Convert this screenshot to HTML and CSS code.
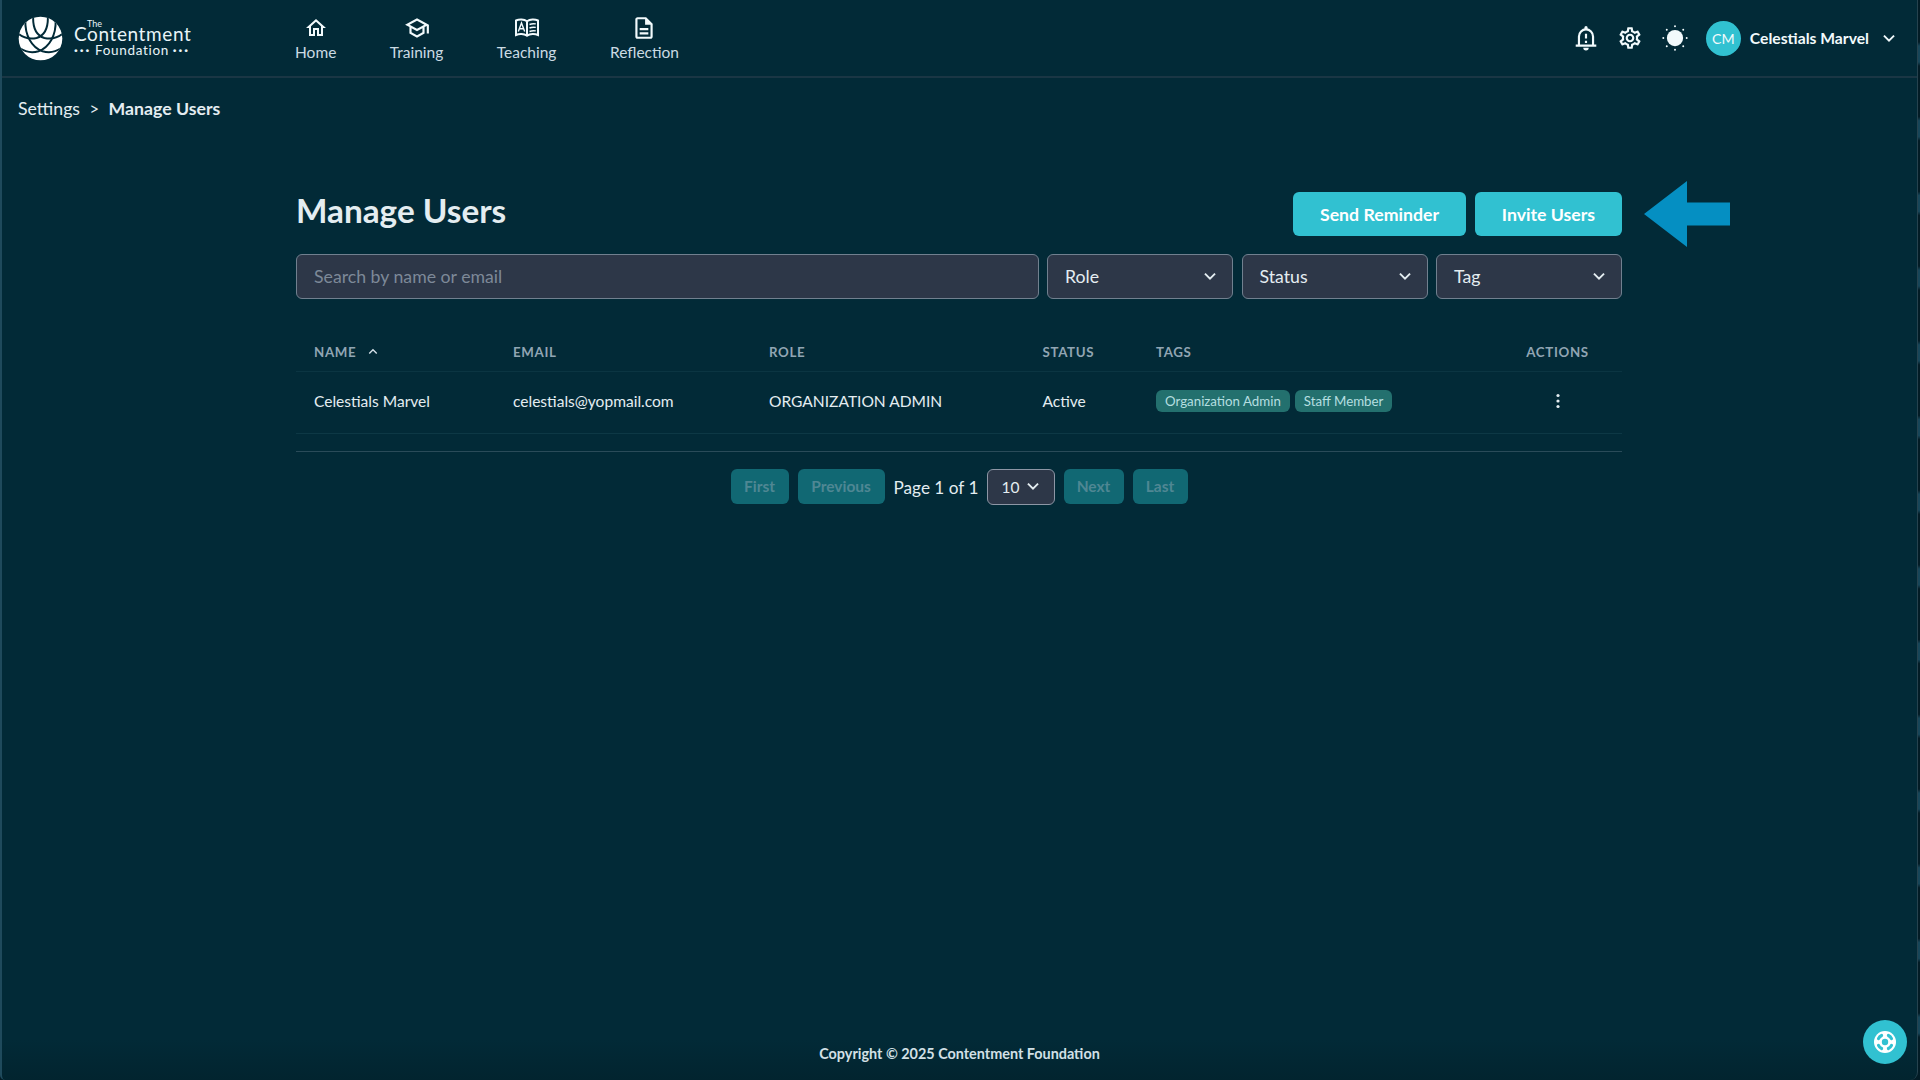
FILE: index.html
```html
<!DOCTYPE html>
<html lang="en">
<head>
  <meta charset="UTF-8">
  <title>Manage Users</title>
  <link rel="stylesheet" href="styles.css">
</head>
<body>
<div class="app">

  <header class="header">
    <a class="logo">
      <svg class="logo-mark" viewBox="0 0 46 46">
        <defs><clipPath id="disc"><circle cx="23" cy="23" r="22.3"/></clipPath></defs>
        <circle cx="23" cy="23" r="22.3" fill="#fff"/>
        <g clip-path="url(#disc)" fill="none" stroke="#022a37" stroke-width="2">
          <path d="M15.500 0C15 12 19 20 27 22.500C34 24 41 22 46 18"/>
          <path d="M30.500 0C31 12 27 20 19 22.500C12 24 5 22 0 18"/>
          <path d="M7.500 4C7 20 14 32 25 36C32 38 38 37 44 33"/>
          <path d="M38.500 4C39 20 32 32 21 36C14 38 8 37 2 33"/>
        </g>
      </svg>
      <span class="logo-text">
        <span class="logo-the">The</span>
        <span class="logo-name">Contentment</span>
        <span class="logo-sub"><i>···</i>Foundation<i>···</i></span>
      </span>
    </a>

    <nav class="nav">
      <a class="nav-item">
        <svg viewBox="0 0 24 24"><path d="M12 5.69l5 4.5V18h-2v-6H9v6H7v-7.81l5-4.5M12 3L2 12h3v8h6v-6h2v6h6v-8h3L12 3z"/></svg>
        Home
      </a>
      <a class="nav-item">
        <svg class="cap" viewBox="0 0 24 24"><path d="M12 3L1 9l4 2.18v6L12 21l7-3.82v-6l2-1.09V17h2V9L12 3zm6.82 6L12 12.72 5.18 9 12 5.28 18.82 9zM17 15.99l-5 2.73-5-2.73v-3.72L12 15l5-2.73v3.72z"/></svg>
        Training
      </a>
      <a class="nav-item">
        <svg class="book" viewBox="0 0 26 20"><g fill="none" stroke="currentColor" stroke-width="2"><path d="M13 3.200C10 1 5 1 2 2.500V17C5 15.500 10 15.500 13 17.700C16 15.500 21 15.500 24 17V2.500C21 1 16 1 13 3.200V17"/><path stroke-width="1.400" d="M4.300 13.500L7.500 5l3.200 8.500M5.500 10.800h4M15.500 6.500c2-.9 4-1 6.300-.6M15.500 10c2-.9 4-1 6.300-.6M15.500 13.500c2-.9 4-1 6.300-.6"/></g></svg>
        Teaching
      </a>
      <a class="nav-item">
        <svg class="doc" viewBox="0 0 24 24"><path d="M8 16h8v2H8zm0-4h8v2H8zm6-10H6c-1.100 0-2 .9-2 2v16c0 1.100.89 2 1.990 2H18c1.100 0 2-.9 2-2V8l-6-6zm4 18H6V4h7v5h5v11z"/></svg>
        Reflection
      </a>
    </nav>

    <div class="tools">
      <svg class="tool" viewBox="0 0 24 24"><g fill="none" stroke="currentColor" stroke-width="2"><path d="M2.500 19h19M5.500 19v-8.500a6.500 6.500 0 0 1 13 0V19"/><path d="M12 8v4.500M12 14.500v2"/></g><path d="M10.500 4.500V2.500a1.500 1.500 0 0 1 3 0v2zM9.500 21h5a2.500 2.500 0 0 1-5 0z"/></svg>
      <svg class="tool" viewBox="0 0 24 24"><path d="M19.430 12.980c.04-.32.07-.64.07-.98 0-.34-.03-.66-.07-.98l2.110-1.650c.19-.15.24-.42.12-.64l-2-3.460c-.09-.16-.26-.25-.44-.25-.06 0-.12.010-.17.030l-2.490 1c-.52-.4-1.080-.73-1.690-.98l-.38-2.650C14.460 2.180 14.250 2 14 2h-4c-.25 0-.46.18-.49.42l-.38 2.650c-.61.25-1.170.59-1.690.98l-2.490-1c-.06-.02-.12-.03-.18-.03-.17 0-.34.09-.43.25l-2 3.460c-.13.22-.07.49.12.64l2.110 1.650c-.04.32-.07.65-.07.98 0 .33.030.66.070.98l-2.110 1.650c-.19.15-.24.42-.12.64l2 3.460c.09.16.26.25.44.25.06 0 .12-.01.17-.03l2.490-1c.52.4 1.080.73 1.690.98l.38 2.650c.03.24.24.42.49.42h4c.25 0 .46-.18.49-.42l.38-2.650c.61-.25 1.170-.59 1.690-.98l2.490 1c.06.02.12.03.18.03.17 0 .34-.09.43-.25l2-3.460c.12-.22.07-.49-.12-.64l-2.110-1.650zm-1.980-1.710c.04.31.05.52.05.73 0 .21-.02.43-.05.73l-.14 1.130.89.7 1.080.84-.7 1.210-1.270-.51-1.040-.42-.9.680c-.43.32-.84.56-1.250.73l-1.060.43-.16 1.130-.2 1.350h-1.400l-.19-1.350-.16-1.130-1.060-.43c-.43-.18-.83-.41-1.230-.71l-.91-.7-1.060.43-1.270.51-.7-1.210 1.080-.84.89-.7-.14-1.130c-.03-.31-.05-.54-.05-.74s.02-.43.05-.73l.14-1.130-.89-.7-1.080-.84.7-1.210 1.270.51 1.040.42.9-.68c.43-.32.84-.56 1.250-.73l1.060-.43.16-1.130.2-1.350h1.390l.19 1.350.16 1.130 1.060.43c.43.18.83.41 1.230.71l.91.7 1.060-.43 1.270-.51.7 1.210-1.070.85-.89.7.14 1.130zM12 8c-2.210 0-4 1.790-4 4s1.790 4 4 4 4-1.790 4-4-1.790-4-4-4zm0 6c-1.100 0-2-.9-2-2s.9-2 2-2 2 .9 2 2-.9 2-2 2z"/></svg>
      <svg class="tool" viewBox="0 0 24 24"><circle cx="12" cy="12" r="7.500"/><path fill="none" stroke="currentColor" stroke-width="1.800" stroke-linecap="round" d="M12 1.200v.01M12 22.800v.01M1.200 12h.01M22.800 12h.01M4.400 4.400h.01M19.600 4.400h.01M4.400 19.600h.01M19.600 19.600h.01"/></svg>
      <span class="avatar">CM</span>
      <span class="user-name">Celestials Marvel</span>
      <svg class="chevron" viewBox="0 0 12 8"><path d="M1.500 1.500L6 6l4.500-4.500"/></svg>
    </div>
  </header>

  <div class="breadcrumb">
    <span>Settings</span><span class="sep">&gt;</span><strong>Manage Users</strong>
  </div>

  <main class="content">
    <div class="title-row">
      <h1>Manage Users</h1>
      <div class="buttons">
        <button class="btn send">Send Reminder</button>
        <button class="btn invite">Invite Users</button>
      </div>
      <svg class="arrow" viewBox="0 0 86 66"><path d="M0 33L43 0v21.500h43v23H43V66z"/></svg>
    </div>

    <div class="filters">
      <input type="text" placeholder="Search by name or email">
      <div class="select">Role <svg class="chevron" viewBox="0 0 12 8"><path d="M1.500 1.500L6 6l4.500-4.500"/></svg></div>
      <div class="select">Status <svg class="chevron" viewBox="0 0 12 8"><path d="M1.500 1.500L6 6l4.500-4.500"/></svg></div>
      <div class="select">Tag <svg class="chevron" viewBox="0 0 12 8"><path d="M1.500 1.500L6 6l4.500-4.500"/></svg></div>
    </div>

    <table class="users">
      <colgroup>
        <col class="c-name"><col class="c-email"><col class="c-role"><col class="c-status"><col class="c-tags"><col>
      </colgroup>
      <thead>
        <tr>
          <th>Name <svg class="sort" viewBox="0 0 12 8"><path d="M1.500 6.500L6 2l4.500 4.500"/></svg></th>
          <th>Email</th>
          <th>Role</th>
          <th>Status</th>
          <th>Tags</th>
          <th class="actions">Actions</th>
        </tr>
      </thead>
      <tbody>
        <tr>
          <td>Celestials Marvel</td>
          <td>celestials@yopmail.com</td>
          <td>ORGANIZATION ADMIN</td>
          <td>Active</td>
          <td><div class="tags"><span class="tag">Organization Admin</span><span class="tag">Staff Member</span></div></td>
          <td class="actions"><svg class="kebab" viewBox="0 0 4 16"><circle cx="2" cy="2.500" r="1.600"/><circle cx="2" cy="8" r="1.600"/><circle cx="2" cy="13.500" r="1.600"/></svg></td>
        </tr>
      </tbody>
    </table>

    <div class="pagination">
      <button class="page-btn first" disabled>First</button>
      <button class="page-btn prev" disabled>Previous</button>
      <span class="page-info">Page 1 of 1</span>
      <div class="page-size">10 <svg class="chevron" viewBox="0 0 12 8"><path d="M1.500 1.500L6 6l4.500-4.500"/></svg></div>
      <button class="page-btn next" disabled>Next</button>
      <button class="page-btn last" disabled>Last</button>
    </div>
  </main>

  <footer class="footer">Copyright © 2025 Contentment Foundation</footer>

  <button class="help">
    <svg viewBox="0 0 24 24"><circle cx="12" cy="12" r="12" fill="#fff"/><circle cx="12" cy="12" r="3.500" fill="#31c1d1"/><g fill="none" stroke="#31c1d1" stroke-width="3.400" stroke-linecap="round"><path d="M4.900 8.300Q6 6 8.300 4.900M15.700 4.900Q18 6 19.100 8.300M19.100 15.700Q18 18 15.700 19.100M8.300 19.100Q6 18 4.900 15.700"/></g></svg>
  </button>

</div>
</body>
</html>
```

FILE: styles.css
```css
* {
  box-sizing: border-box;
}
body {
  margin: 0;
  height: 1080px;
  overflow: hidden;
  font-family: Lato, sans-serif;
  font-size: 17.7px;
  color: #e4edf1;
  background: #031c26 repeating-linear-gradient(#031c26 0 42px, #174558 46px 62px, #031c26 66px 74.7px);
}
.app {
  position: relative;
  display: flex;
  flex-direction: column;
  height: 1080px;
  margin-right: 2px;
  background: linear-gradient(#022a37 1040px, #02242f);
  border-left: 2px solid #1f4a5c;
  border-right: 1px solid #26434f;
  border-radius: 0 0 8px 5px;
}
svg {
  display: block;
  flex: none;
  fill: currentColor;
}
button {
  padding: 0;
  border: none;
  font-family: inherit;
}

/* header */
.header {
  display: flex;
  align-items: center;
  flex: none;
  height: 78px;
  padding: 0 21px 0 16px;
  border-bottom: 2px solid #1a3644;
}
.logo {
  display: flex;
  width: 277px;
  align-items: center;
}
.logo-mark {
  width: 45px;
  height: 45px;
}
.logo-text {
  position: relative;
  display: block;
  width: 116px;
  margin-left: 11px;
  padding-top: 5px;
  color: #e8f4f8;
}
.logo-the {
  position: absolute;
  left: 13px;
  top: 0;
  font-size: 9px;
  line-height: 9px;
}
.logo-name {
  display: block;
  font-size: 19px;
  line-height: 19px;
  letter-spacing: 0.6px;
}
.logo-sub {
  display: flex;
  justify-content: space-between;
  font-size: 13.500px;
  line-height: 15px;
  letter-spacing: 0.7px;
}
.logo-sub i {
  font-style: normal;
  font-weight: 900;
  letter-spacing: 2px;
}
.nav {
  display: flex;
  gap: 53.500px;
}
.nav-item {
  display: flex;
  flex-direction: column;
  align-items: center;
  font-size: 15.500px;
  line-height: 20px;
  color: #cbdbe3;
}
.nav-item svg {
  width: 24px;
  height: 26px;
  margin-bottom: 1px;
  color: #f2fafc;
}
.nav-item .cap {
  width: 30px;
}
.nav-item .book {
  width: 26px;
}
.nav-item .doc {
  width: 26px;
}
.tools {
  display: flex;
  align-items: center;
  margin-left: auto;
  color: #f2fafc;
}
.tool {
  width: 26px;
  height: 26px;
  margin-right: 18.300px;
}
.avatar {
  width: 35px;
  height: 35px;
  margin-right: 9px;
  border-radius: 50%;
  background: #31c1d1;
  font-size: 14.200px;
  line-height: 35px;
  text-align: center;
}
.user-name {
  font-size: 15.700px;
  font-weight: 700;
  margin-right: 13px;
}
.chevron {
  width: 14px;
  height: 9px;
}
.chevron path,
.sort path {
  fill: none;
  stroke: currentColor;
  stroke-width: 1.7;
}

.breadcrumb {
  display: flex;
  padding: 20px 16px 0;
  line-height: 22px;
}
.sep {
  margin: 0 9.500px;
  font-size: 16.500px;
}

/* page content */
.content {
  width: 1326px;
  margin: 72px 0 0 294px;
}
.title-row {
  position: relative;
  display: flex;
  justify-content: space-between;
  height: 44px;
}
h1 {
  margin: -6px 0 0;
  font-size: 33.300px;
  line-height: 48px;
  height: 44px;
}
.buttons {
  display: flex;
  gap: 9px;
}
.btn {
  height: 44px;
  border-radius: 6px;
  background: #31c1d1;
  color: #fff;
  font-size: 17.700px;
  font-weight: 700;
}
.send {
  width: 173px;
}
.invite {
  width: 147px;
}
.arrow {
  position: absolute;
  left: 1348px;
  top: -11px;
  width: 86px;
  height: 66px;
  color: #058fc2;
}
.filters {
  display: grid;
  grid-template-columns: 1fr 186px 186px 186px;
  gap: 8.500px;
  margin-top: 18px;
}
.filters input,
.select {
  height: 45px;
  padding: 0 15px 0 17px;
  border: 1px solid #71808f;
  border-radius: 6px;
  background: #2d3748;
  color: #e4edf1;
  font: 17.700px Lato, sans-serif;
}
.filters input::placeholder {
  color: #7d8998;
}
.select,
.page-size {
  display: flex;
  align-items: center;
  justify-content: space-between;
}

.users {
  width: 100%;
  margin-top: 35px;
  border-collapse: collapse;
  table-layout: fixed;
}
.c-name { width: 199px; }
.c-email { width: 256px; }
.c-role { width: 273.5px; }
.c-status { width: 113.5px; }
.c-tags { width: 355px; }
.users th {
  height: 37px;
  padding: 0 0 0 18px;
  border-bottom: 1px solid #0b3542;
  color: #91a5b3;
  font-size: 13.300px;
  letter-spacing: 0.66px;
  text-align: left;
  text-transform: uppercase;
}
.users td {
  height: 62px;
  padding: 0 0 3px 18px;
  border-bottom: 1px solid #0d3845;
  font-size: 15.550px;
}
.users .actions {
  padding-left: 0;
  text-align: center;
}
.sort {
  display: inline-block;
  width: 10px;
  height: 7px;
  margin: 0 0 2px 8px;
  color: #d3dfe6;
}
.tags {
  display: flex;
  gap: 5px;
}
.tag {
  padding: 0 9px;
  border-radius: 6px;
  background: #23706e;
  color: #b5dfe0;
  font-size: 13.300px;
  line-height: 22px;
}
.kebab {
  width: 4px;
  height: 16px;
  margin: 0 auto;
}

.pagination {
  display: flex;
  justify-content: center;
  gap: 9px;
  margin-top: 17px;
  padding-top: 17px;
  border-top: 1px solid #2a4b59;
}
.page-btn {
  height: 35px;
  border-radius: 6px;
  background: #116873;
  color: #4f8793;
  font-size: 15.500px;
  font-weight: 700;
}
.first { width: 58px; }
.prev { width: 87px; }
.next { width: 60px; }
.last { width: 55px; }
.page-info {
  width: 84px;
  font-size: 17.200px;
  line-height: 38px;
  white-space: nowrap;
}
.page-size {
  width: 68px;
  height: 36px;
  padding: 0 14px;
  border: 1px solid #8d96a5;
  border-radius: 6px;
  background: #2d3748;
  font-size: 15.500px;
}

.footer {
  margin-top: auto;
  height: 35px;
  font-size: 14.400px;
  font-weight: 700;
  line-height: 18px;
  text-align: center;
  color: #d2e0e6;
}
.help {
  position: absolute;
  right: 10px;
  bottom: 16px;
  display: flex;
  align-items: center;
  justify-content: center;
  width: 44px;
  height: 44px;
  border-radius: 50%;
  background: #31c1d1;
}
.help svg {
  width: 22px;
  height: 22px;
}
```
